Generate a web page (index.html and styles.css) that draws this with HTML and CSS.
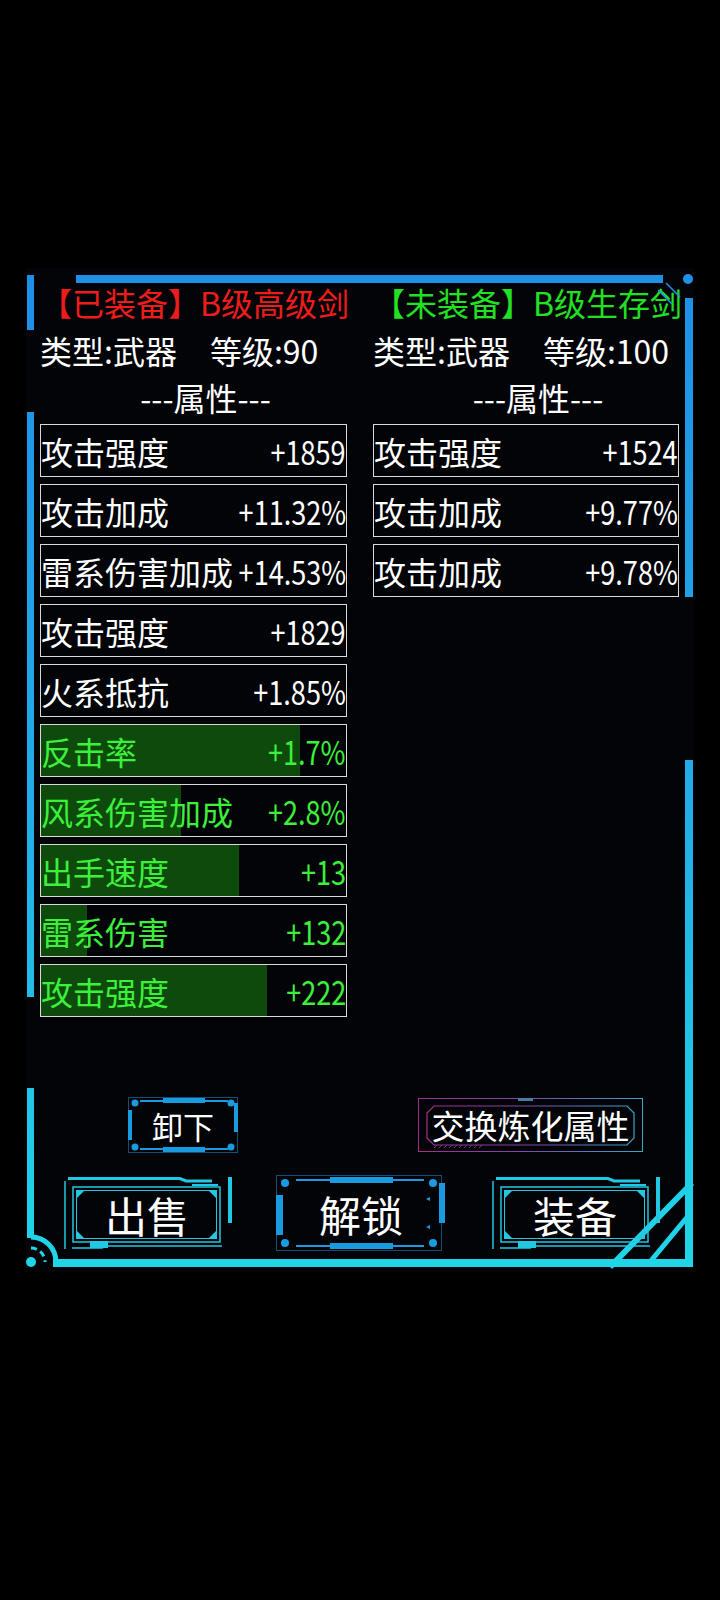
FILE: index.html
```html
<!DOCTYPE html>
<html lang="zh-CN">

<head>
    <meta charset="UTF-8">
    <meta name="viewport" content="width=device-width, initial-scale=1.0">
    <title>装备对比</title>
    <link rel="stylesheet" href="styles.css">
</head>

<body>
    <div class="panel">
        <!-- frame decoration -->
        <svg class="frame" viewBox="0 0 668 1004" width="668" height="1004">
            <defs>
                <linearGradient id="edge" x1="0" y1="0" x2="0" y2="1004" gradientUnits="userSpaceOnUse">
                    <stop offset="0" stop-color="#1e8fe6" />
                    <stop offset="0.55" stop-color="#22aee8" />
                    <stop offset="1" stop-color="#20d6e8" />
                </linearGradient>
            </defs>
            <g fill="url(#edge)">
                <rect x="50" y="7" width="587" height="8" />
                <rect x="1" y="7" width="7" height="55" />
                <rect x="1" y="144" width="7" height="585" />
                <rect x="1" y="820" width="7" height="150" />
                <rect x="27" y="991" width="640" height="8" />
                <rect x="659" y="30" width="8" height="299" />
                <rect x="659" y="492" width="8" height="505" />
                <circle cx="662" cy="11" r="5" />
                <circle cx="5" cy="994" r="5" />
            </g>
            <g fill="none" stroke="url(#edge)">
                <path d="M5 969 A25 25 0 0 1 30 994" stroke-width="5" />
                <path d="M5 980 A14 14 0 0 1 19 994" stroke-width="3" stroke-dasharray="6 4" />
                <path d="M666 915 L584 999" stroke-width="6" />
                <path d="M663 947 L663 994 L624 994 Z" stroke-width="5" />
                <path d="M632 22 L646 36 M640 15 L654 29" stroke-width="1.5" />
            </g>
        </svg>

        <div class="columns">
            <div class="column">
                <div class="title equipped">【已装备】B级高级剑</div>
                <div class="info"><span>类型:武器</span><span>等级:90</span></div>
                <div class="attr-title">---属性---</div>
                <div class="attr-list">
                    <div class="attr"><span class="name">攻击强度</span><span class="value">+1859</span></div>
                    <div class="attr"><span class="name">攻击加成</span><span class="value">+11.32%</span></div>
                    <div class="attr"><span class="name">雷系伤害加成</span><span class="value">+14.53%</span></div>
                    <div class="attr"><span class="name">攻击强度</span><span class="value">+1829</span></div>
                    <div class="attr"><span class="name">火系抵抗</span><span class="value">+1.85%</span></div>
                    <div class="attr refine" style="--p: 85%"><span class="name">反击率</span><span class="value">+1.7%</span></div>
                    <div class="attr refine" style="--p: 46%"><span class="name">风系伤害加成</span><span class="value">+2.8%</span></div>
                    <div class="attr refine" style="--p: 65%"><span class="name">出手速度</span><span class="value">+13</span></div>
                    <div class="attr refine" style="--p: 15%"><span class="name">雷系伤害</span><span class="value">+132</span></div>
                    <div class="attr refine" style="--p: 74%"><span class="name">攻击强度</span><span class="value">+222</span></div>
                </div>
            </div>
            <div class="column">
                <div class="title unequipped">【未装备】B级生存剑</div>
                <div class="info"><span>类型:武器</span><span>等级:100</span></div>
                <div class="attr-title">---属性---</div>
                <div class="attr-list">
                    <div class="attr"><span class="name">攻击强度</span><span class="value">+1524</span></div>
                    <div class="attr"><span class="name">攻击加成</span><span class="value">+9.77%</span></div>
                    <div class="attr"><span class="name">攻击加成</span><span class="value">+9.78%</span></div>
                </div>
            </div>
        </div>

        <div class="actions-top">
            <div class="btn btn-small unload">
                <svg class="btn-frame" viewBox="0 0 110 56">
                    <rect x="0.5" y="0.5" width="109" height="55" fill="none" stroke="#134e74" />
                    <g stroke="#1a9be0" stroke-width="2" fill="none">
                        <path d="M12 4 H100 M12 52 H100" />
                    </g>
                    <g fill="#1a9be0">
                        <rect x="35" y="1" width="42" height="5" />
                        <rect x="35" y="50" width="42" height="5" />
                        <circle cx="7" cy="6" r="3.5" />
                        <circle cx="103" cy="6" r="3.5" />
                        <circle cx="7" cy="50" r="3.5" />
                        <circle cx="103" cy="50" r="3.5" />
                        <rect x="0" y="13" width="4" height="30" />
                        <rect x="106" y="6" width="4" height="29" />
                    </g>
                </svg>
                <span>卸下</span>
            </div>
            <div class="btn btn-small swap">
                <svg class="btn-frame" viewBox="0 0 225 54">
                    <defs>
                        <linearGradient id="swapEdge" x1="0" y1="0" x2="1" y2="0">
                            <stop offset="0" stop-color="#a42d8c" />
                            <stop offset="0.5" stop-color="#7a4aa8" />
                            <stop offset="1" stop-color="#3aa6c8" />
                        </linearGradient>
                    </defs>
                    <g fill="none" stroke="url(#swapEdge)">
                        <rect x="0.5" y="0.5" width="224" height="53" stroke-width="1" />
                        <path d="M16 8 H209 L216 15 V40 L209 47 H16 L9 40 V15 Z" stroke-width="1.2" />
                    </g>
                    <rect x="100" y="0" width="15" height="3" fill="#4a7aa8" />
                    <g stroke="#6a3a8a" stroke-width="1">
                        <path d="M16 50 l3 -3 M21 50 l3 -3 M26 50 l3 -3 M31 50 l3 -3 M36 50 l3 -3 M41 50 l3 -3 M46 50 l3 -3 M51 50 l3 -3 M56 50 l3 -3 M61 50 l3 -3" />
                    </g>
                </svg>
                <span>交换炼化属性</span>
            </div>
        </div>

        <div class="actions-bottom">
            <div class="btn btn-big sell">
                <svg class="btn-frame" viewBox="0 0 170 74">
                    <g fill="none" stroke="#22c8e2">
                        <path d="M6 1.5 H118 L124 4 H150" stroke-width="3" />
                        <path d="M130 8 H156" stroke-width="2" />
                        <path d="M3 4 V72" stroke-width="1.5" />
                        <rect x="11" y="10" width="147" height="55" stroke-width="1.5" />
                        <rect x="14.5" y="13.5" width="140" height="48" stroke-width="1" />
                        <path d="M10 71 H40 L44 69 H160" stroke-width="1.5" />
                    </g>
                    <g fill="#22c8e2">
                        <rect x="166" y="0" width="4" height="46" />
                        <rect x="28" y="64" width="18" height="7" />
                        <path d="M15 14 L22 14 L15 21 Z" />
                        <path d="M154 14 L147 14 L154 21 Z" />
                        <path d="M15 61 L22 61 L15 54 Z" />
                        <path d="M154 61 L147 61 L154 54 Z" />
                    </g>
                </svg>
                <span>出售</span>
            </div>
            <div class="btn btn-big unlock">
                <svg class="btn-frame" viewBox="0 0 170 76">
                    <rect x="0.5" y="0.5" width="165" height="75" fill="none" stroke="#134e74" />
                    <g stroke="#1a9be0" stroke-width="2" fill="none">
                        <path d="M20 5 H148 M20 71 H148" />
                    </g>
                    <g fill="#1a9be0">
                        <rect x="54" y="2" width="63" height="6" />
                        <rect x="54" y="68" width="63" height="6" />
                        <circle cx="9" cy="8" r="4" />
                        <circle cx="157" cy="8" r="4" />
                        <circle cx="9" cy="68" r="4" />
                        <circle cx="157" cy="68" r="4" />
                        <rect x="0" y="20" width="7" height="40" />
                        <rect x="163" y="8" width="6" height="40" />
                        <path d="M150 24 l4 -2 v4 Z M150 52 l4 -2 v4 Z" />
                    </g>
                </svg>
                <span>解锁</span>
            </div>
            <div class="btn btn-big equip">
                <svg class="btn-frame" viewBox="0 0 170 74">
                    <g fill="none" stroke="#22c8e2">
                        <path d="M6 1.5 H118 L124 4 H150" stroke-width="3" />
                        <path d="M130 8 H156" stroke-width="2" />
                        <path d="M3 4 V72" stroke-width="1.5" />
                        <rect x="11" y="10" width="147" height="55" stroke-width="1.5" />
                        <rect x="14.5" y="13.5" width="140" height="48" stroke-width="1" />
                        <path d="M10 71 H40 L44 69 H160" stroke-width="1.5" />
                    </g>
                    <g fill="#22c8e2">
                        <rect x="166" y="0" width="4" height="46" />
                        <rect x="28" y="64" width="18" height="7" />
                        <path d="M15 14 L22 14 L15 21 Z" />
                        <path d="M154 14 L147 14 L154 21 Z" />
                        <path d="M15 61 L22 61 L15 54 Z" />
                        <path d="M154 61 L147 61 L154 54 Z" />
                    </g>
                </svg>
                <span>装备</span>
            </div>
        </div>
    </div>
</body>

</html>
```

FILE: styles.css
```css
:root {
    --background: black;
    --text: white;
    --panel: #020408;
    --red: #f01c1c;
    --green: #22e022;
    --refine-text: #3cf03c;
    --refine-fill: #0d4a0b;
}

body {
    margin: 0;
    height: 1600px;
    background-color: var(--background);
    color: var(--text);
    font-family: "Noto Sans CJK SC", "Noto Sans", sans-serif;
    overflow: hidden;
}

.panel {
    position: relative;
    margin: 268px 0 0 26px;
    width: 668px;
    height: 1004px;
    box-sizing: border-box;
    padding: 10px 0 0 14px;
    background-color: var(--panel);
}

.frame {
    position: absolute;
    left: 0;
    top: 0;
    overflow: visible;
    pointer-events: none;
}

.columns {
    display: grid;
    grid-template-columns: 307px 306px;
    column-gap: 26px;
    align-items: start;
}

.column {
    display: flex;
    flex-direction: column;
}

.title {
    font-size: 32px;
    line-height: 48px;
    white-space: nowrap;
}

.equipped {
    color: var(--red);
}

.unequipped {
    color: var(--green);
}

.info {
    display: flex;
    gap: 33px;
    font-size: 32px;
    line-height: 48px;
    white-space: nowrap;
}

.attr-title {
    font-size: 32px;
    line-height: 46px;
    text-align: center;
    padding-left: 24px;
}

.attr-list {
    margin-top: 4px;
    display: flex;
    flex-direction: column;
    gap: 7px;
}

.attr {
    display: flex;
    align-items: center;
    height: 53px;
    box-sizing: border-box;
    border: 1px solid #d8d8d8;
    font-size: 32px;
    white-space: nowrap;
}

.attr .name {
    flex: 1 1 0;
    min-width: 0;
}

/* numbers in the game font are narrow */
.attr .value {
    flex-shrink: 0;
    display: inline-block;
    font-size: 33px;
    transform: scaleX(0.82);
    transform-origin: right center;
}

.attr.refine {
    color: var(--refine-text);
    background: linear-gradient(to right, var(--refine-fill) var(--p), transparent var(--p));
}

/* buttons */
.btn {
    position: relative;
    display: flex;
    align-items: center;
    justify-content: center;
    flex-shrink: 0;
}

.btn-frame {
    position: absolute;
    left: 0;
    top: 0;
    width: 100%;
    height: 100%;
}

.btn span {
    position: relative;
}

.actions-top {
    display: flex;
    align-items: center;
    margin-top: 80px;
    padding-left: 88px;
    gap: 180px;
}

.btn-small {
    height: 56px;
    font-size: 31px;
}

.unload {
    width: 110px;
}

.swap {
    width: 225px;
    height: 54px;
    font-size: 33px;
}

.actions-bottom {
    display: flex;
    margin-top: 24px;
    padding-left: 22px;
}

.btn-big {
    width: 170px;
    height: 74px;
    font-size: 42px;
}

.unlock {
    height: 76px;
    margin: -2px 0 0 44px;
}

.equip {
    margin-left: 44px;
}
```
